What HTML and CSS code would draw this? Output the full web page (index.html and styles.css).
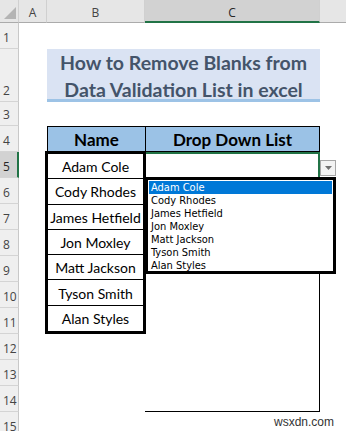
FILE: index.html
```html
<!DOCTYPE html>
<html lang="en">
<head>
    <meta charset="UTF-8">
    <meta name="viewport" content="width=device-width, initial-scale=1.0">
    <title>Remove Blanks from Data Validation List</title>
    <link rel="stylesheet" href="styles.css">
</head>
<body>
    <div class="sheet">
        <div class="corner">
            <svg width="12" height="12" viewBox="0 0 12 12"><polygon points="12,0 12,12 0,12" fill="#b4b4b4"/></svg>
        </div>
        <div class="colhead col-a">A</div>
        <div class="colhead col-b">B</div>
        <div class="colhead col-c active">C</div>
        <div class="colhead col-d"></div>

        <div class="rowheads">
            <div class="rh">1</div>
            <div class="rh">2</div>
            <div class="rh">3</div>
            <div class="rh">4</div>
            <div class="rh active">5</div>
            <div class="rh">6</div>
            <div class="rh">7</div>
            <div class="rh">8</div>
            <div class="rh">9</div>
            <div class="rh">10</div>
            <div class="rh">11</div>
            <div class="rh">12</div>
            <div class="rh">13</div>
            <div class="rh">14</div>
            <div class="rh">15</div>
        </div>

        <div class="title">How to Remove Blanks from<br>Data Validation List in excel</div>

        <div class="th th-name">Name</div>
        <div class="th th-list">Drop Down List</div>

        <div class="names">
            <div class="name">Adam Cole</div>
            <div class="name">Cody Rhodes</div>
            <div class="name">James Hetfield</div>
            <div class="name">Jon Moxley</div>
            <div class="name">Matt Jackson</div>
            <div class="name">Tyson Smith</div>
            <div class="name">Alan Styles</div>
        </div>

        <div class="listcol">
            <div class="cell-active">
                <div class="dd-arrow">
                    <svg width="7" height="4" viewBox="0 0 7 4"><polygon points="0,0 7,0 3.5,4" fill="#707070"/></svg>
                </div>
                <ul class="dd-menu">
                    <li class="selected">Adam Cole</li>
                    <li>Cody Rhodes</li>
                    <li>James Hetfield</li>
                    <li>Jon Moxley</li>
                    <li>Matt Jackson</li>
                    <li>Tyson Smith</li>
                    <li>Alan Styles</li>
                </ul>
            </div>
        </div>

        <div class="watermark">wsxdn.com</div>
    </div>
</body>
</html>
```

FILE: styles.css
```css
body {
    margin: 0;
    background: #ffffff;
    font-family: Lato, "Open Sans", sans-serif;
    overflow: hidden;
}
.sheet {
    display: grid;
    grid-template-columns: 19px 28px 98px 175px 26px;
    grid-template-rows: 23px 26px 53px 24px repeat(12, 26px);
    width: 346px;
    height: 431px;
}
.corner {
    grid-row: 1;
    grid-column: 1;
    background: #e6e6e6;
    border-bottom: 1px solid #ababab;
    border-right: 1px solid #d0d0d0;
    display: flex;
    align-items: flex-end;
    justify-content: flex-end;
    padding: 0 2px 3px 0;
    box-sizing: border-box;
}
.colhead {
    grid-row: 1;
    background: #e6e6e6;
    border-bottom: 1px solid #ababab;
    border-right: 1px solid #d0d0d0;
    box-sizing: border-box;
    font-family: "Open Sans", sans-serif;
    font-size: 12px;
    color: #444444;
    text-align: center;
    padding-top: 4px;
}
.col-a { grid-column: 2; }
.col-b { grid-column: 3; }
.col-c { grid-column: 4; }
.col-d { grid-column: 5; border-right: none; }
.colhead.active {
    background: #d2d2d2;
    border-bottom: 2px solid #217346;
    color: #262626;
}
.rowheads {
    grid-column: 1;
    grid-row: 2 / 17;
    display: grid;
    grid-template-rows: 26px 53px 24px repeat(12, 26px);
    background: #efefef;
}
.rh {
    border-bottom: 1px solid #d4d4d4;
    border-right: 1px solid #c8c8c8;
    box-sizing: border-box;
    font-family: "Open Sans", sans-serif;
    font-size: 12px;
    color: #444444;
    display: flex;
    align-items: flex-end;
    padding: 0 0 2px 3px;
}
.rh.active {
    background: #d2d2d2;
    border-right: 2px solid #217346;
    color: #262626;
}
.title {
    grid-row: 3;
    grid-column: 3 / 5;
    background: #dae3f3;
    border-bottom: 3px solid #9dc3e6;
    box-sizing: border-box;
    color: #44546a;
    font-weight: bold;
    font-size: 19.5px;
    line-height: 27px;
    text-align: center;
}
.th {
    grid-row: 5;
    background: #9bc2e6;
    border: 1px solid #000000;
    box-sizing: border-box;
    font-weight: bold;
    font-size: 17px;
    color: #000000;
    display: flex;
    align-items: center;
    justify-content: center;
    padding-top: 1px;
}
.th-name {
    grid-column: 3;
    border-right: none;
}
.th-list {
    grid-column: 4;
}
.names {
    grid-column: 3;
    grid-row: 6 / 13;
    display: grid;
    grid-template-rows: repeat(7, 1fr);
    border: 3px solid #000000;
    margin: -1px -1px 0 -2px;
    position: relative;
    z-index: 1;
    background: #ffffff;
}
.name {
    border-bottom: 1px solid #000000;
    font-size: 14px;
    color: #000000;
    display: flex;
    align-items: center;
    justify-content: center;
    white-space: nowrap;
    padding-top: 1px;
}
.name:last-child {
    border-bottom: none;
}
.listcol {
    grid-column: 4;
    grid-row: 6 / 16;
    border: 1px solid #000000;
    border-top: none;
    border-left: none;
    box-sizing: border-box;
}
.cell-active {
    position: relative;
    height: 26px;
    border-top: 2px solid #217346;
    border-right: 2px solid #217346;
    box-sizing: border-box;
    margin-right: -1px;
}
.dd-arrow {
    position: absolute;
    left: 175px;
    top: 6px;
    width: 16px;
    height: 16px;
    background: #f3f3f3;
    border: 1px solid #a6a6a6;
    box-sizing: border-box;
    display: flex;
    align-items: center;
    justify-content: center;
}
.dd-menu {
    position: absolute;
    left: 0;
    top: 23px;
    width: 191px;
    height: 97px;
    margin: 0;
    padding: 1px;
    list-style: none;
    background: #ffffff;
    border: 3px solid #000000;
    box-sizing: border-box;
    z-index: 2;
}
.dd-menu li {
    height: 13px;
    line-height: 13px;
    font-family: "DejaVu Sans Condensed", "DejaVu Sans", sans-serif;
    font-stretch: condensed;
    font-size: 11px;
    padding-left: 2px;
    color: #000000;
    white-space: nowrap;
}
.dd-menu li.selected {
    background: #0078d7;
    color: #ffffff;
}
.watermark {
    grid-column: 4 / 6;
    grid-row: 16;
    font-family: "Liberation Sans", Arial, sans-serif;
    font-size: 12px;
    color: #333333;
    text-align: right;
    padding: 3px 12px 0 0;
}
```
